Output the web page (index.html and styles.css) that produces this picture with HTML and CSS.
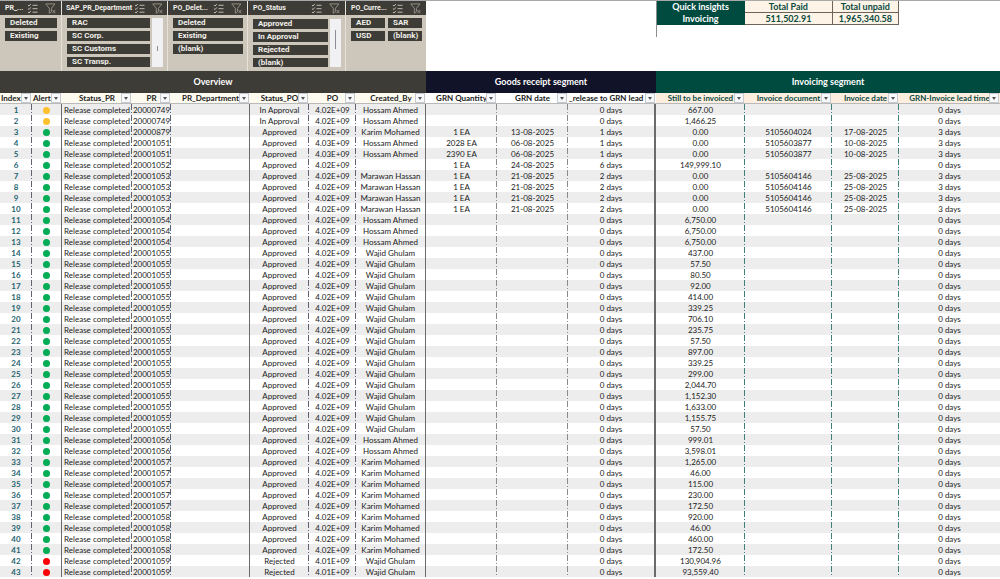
FILE: index.html
```
<!DOCTYPE html>
<html lang="en">
<head>
  <meta charset="UTF-8" />
  <title>PR / PO tracker</title>
  <link rel="stylesheet" href="styles.css">
</head>
<body>

  <svg width="0" height="0" class="icon-defs" aria-hidden="true">
    <symbol id="multi" viewBox="0 0 12 12">
      <path d="M1 2.2l1.2 1.2L4.2 1M1 6l1.2 1.2L4.2 4.8M1 9.8L2.2 11l2-2.4M6 2.5h5.5M6 6.2h5.5M6 10h5.5" />
    </symbol>
    <symbol id="clear" viewBox="0 0 12 12">
      <path d="M.8 1h10L7 5.8M.8 1l3.9 4.8v5.4L7 9.5V5.8M8 7.5l3.4 3.7M11.4 7.5L8 11.2" />
    </symbol>
  </svg>

  <header class="top">
    <div class="slicers" id="slicers"></div>
    <table class="insights">
      <tr><th class="label">Quick insights</th><th>Total Paid</th><th>Total unpaid</th></tr>
      <tr><th class="label">Invoicing</th><td>511,502.91</td><td>1,965,340.58</td></tr>
    </table>
  </header>

  <table class="tracker">
    <colgroup>
      <col class="c-index"><col class="c-alert"><col class="c-status-pr"><col class="c-pr"><col class="c-dept">
      <col class="c-status-po"><col class="c-po"><col class="c-by">
      <col class="c-qty"><col class="c-date"><col class="c-release">
      <col class="c-still"><col class="c-doc"><col class="c-inv-date"><col class="c-lead">
    </colgroup>
    <thead>
      <tr class="bands">
        <th colspan="8" class="overview">Overview</th>
        <th colspan="3" class="goods">Goods receipt segment</th>
        <th colspan="4" class="invoicing">Invoicing segment</th>
      </tr>
      <tr class="fields" id="fields"></tr>
    </thead>
    <tbody id="rows"></tbody>
  </table>

  <script src="script.js"></script>
</body>
</html>
```
FILE: styles.css
```
body {
  margin: 0;
  background: white;
  color: #222;
  font-family: Lato, "Liberation Sans", sans-serif;
  font-size: 8px;
  overflow: hidden;
}
button {
  margin: 0;
  padding: 0;
  border: none;
  font-family: inherit;
  font-size: inherit;
  cursor: pointer;
}
table { border-collapse: separate; border-spacing: 0; table-layout: fixed; }
th, td { padding: 0; }
.icon-defs { position: absolute; }

/* top area */
.top {
  display: flex;
  align-items: flex-start;
  height: 70px;
  border-top: 1px solid #a9a9a9;
}
.slicers {
  display: grid;
  grid-template-columns: 61fr 105fr 79fr 97fr 80fr;
  gap: 1px;
  width: 42.6%;
  height: 70px;
  background: #e6e2da;
  font-family: Roboto, "Liberation Sans", sans-serif;
}
.slicer {
  display: flex;
  flex-direction: column;
  min-width: 0;
  background: #cdc6ba;
}
.slicer-head {
  display: flex;
  align-items: center;
  gap: 7px;
  height: 14px;
  padding: 0 5px;
  background: #3d3c36;
  color: #f1efea;
}
.slicer h2 {
  flex: 1;
  min-width: 0;
  margin: 0;
  font-size: 7px;
  font-weight: bold;
  line-height: 14px;
  white-space: nowrap;
}
.tool { width: 11px; height: 11px; background: none; }
.tool svg {
  display: block;
  width: 11px;
  height: 11px;
  fill: none;
  stroke: #c9c5bb;
}
.tool:last-child svg { stroke: #99958b; }
.slicer.tight .slicer-head { padding: 0 4px; }
.slicer-body {
  display: flex;
  gap: 2px;
  height: 49px;
  margin: 3px 4px 0 5px;
  overflow: hidden;
}
.slicer.low .slicer-body { height: 48px; margin-top: 4px; }
.items {
  display: grid;
  flex: 1;
  align-content: start;
  gap: 3px;
}
.items.two { grid-template-columns: 1fr 1fr; }
.items button {
  height: 10px;
  padding-left: 5px;
  background: #3d3c36;
  color: #f1efea;
  font-weight: bold;
  line-height: 10px;
  text-align: left;
}
.scroll { width: 11px; padding-top: 28px; background: #f1f0f2; }
.scroll i { display: block; width: 1px; height: 5px; margin: 0 auto; background: #8c8c98; }
.scroll.long { padding-top: 11px; }
.scroll.long i { height: 19px; }

.insights {
  width: 24.3%;
  margin-left: 23%;
  padding-bottom: 12px;
  border-left: 1px solid #8c8c8c;
  color: #0b4a3f;
  font-size: 9px;
  font-weight: bold;
  text-align: center;
}
.insights th, .insights td {
  height: 11px;
  border: 1px solid #6e6459;
  border-width: 0 1px 1px 0;
  background: #fdf3e6;
  line-height: 11px;
}
.insights .label { width: 36%; border-color: #004b40; background: #004b40; color: white; }
.insights th:last-child { width: 27%; }

/* main table */
.tracker { width: 100%; text-align: center; }
.c-index { width: 3.2%; }
.c-alert { width: 3%; }
.c-status-pr, .c-by { width: 7%; }
.c-pr { width: 3.9%; }
.c-dept { width: 7.9%; }
.c-status-po { width: 5.9%; }
.c-po { width: 4.7%; }
.c-qty, .c-date { width: 7.1%; }
.c-release { width: 8.8%; }
.c-still { width: 8.9%; }
.c-doc { width: 8.7%; }
.c-inv-date { width: 6.7%; }
.c-lead { width: 10.1%; }

.bands th { height: 22px; color: white; font-size: 9px; line-height: 22px; }
.overview { background: #3d3c36; }
.goods { background: #111428; }
.invoicing { background: #004b40; }

.fields th {
  position: relative;
  height: 10px;
  border-bottom: 1px solid #b9b9b9;
  background: #fdfaf0;
  color: #222;
  line-height: 10px;
}
.fields span {
  display: flex;
  justify-content: center;
  overflow: hidden;
  white-space: nowrap;
}
.fields .left span { justify-content: flex-start; padding-left: 1px; }
.fields .gr { background: white; }
.fields .inv { background: #fdeedf; color: #0b4a3f; }
.fields button {
  position: absolute;
  top: 0;
  right: 1px;
  width: 10px;
  height: 10px;
  border: 1px solid #c6c9d0;
  background: #f8f9fb;
}
.fields button::after {
  content: "";
  display: block;
  width: 0;
  margin: 0 auto;
  border: 2px solid transparent;
  border-top: 3px solid #555;
  border-bottom: 0;
}

.tracker td {
  height: 10px;
  padding-top: 1px;
  overflow: hidden;
  line-height: 10px;
  white-space: nowrap;
}
.tracker tbody tr:nth-child(odd) { background: #ededed; }
.tracker tbody td:first-child { color: #1f6470; font-weight: bold; }
.dash {
  background: linear-gradient(#5f6470 0 6px, transparent 6px 8px, #5f6470 8px 9px, transparent 9px) right / 1px 11px no-repeat;
}
.dash.gr {
  background-image: linear-gradient(#8a8a8a 0 6px, transparent 6px 8px, #8a8a8a 8px 9px, transparent 9px);
}
.dash.inv {
  background-image: linear-gradient(#3f8078 0 6px, transparent 6px 8px, #3f8078 8px 9px, transparent 9px);
}
.solid { border-right: 1px solid #6b6b6b; }
.solid.gr { border-right-width: 2px; }
.dot {
  display: block;
  width: 7px;
  height: 7px;
  margin: 0 auto;
  border-radius: 50%;
}
.yellow { background: #fdc02f; }
.green { background: #00ac55; }
.red { background: #fb0007; }
```
FILE: script.js
```
const slicers = [
  { title: 'PR_...', items: ['Deleted', 'Existing'] },
  { title: 'SAP_PR_Department', items: ['RAC', 'SC Corp.', 'SC Customs', 'SC Transp.'], scroll: 'scroll', cls: 'tight' },
  { title: 'PO_Delet...', items: ['Deleted', 'Existing', '(blank)'] },
  { title: 'PO_Status', items: ['Approved', 'In Approval', 'Rejected', '(blank)'], scroll: 'scroll long', cls: 'low' },
  { title: 'PO_Curre...', items: ['AED', 'SAR', 'USD', '(blank)'], grid: 'two' }
];

const icon = (name, label) =>
  `<button class="tool" aria-label="${label}"><svg><use href="#${name}"/></svg></button>`;

document.getElementById('slicers').innerHTML = slicers.map(s => `
  <section class="slicer ${s.cls || ''}">
    <div class="slicer-head"><h2>${s.title}</h2>${icon('multi', 'Multi-select')}${icon('clear', 'Clear filter')}</div>
    <div class="slicer-body">
      <div class="items ${s.grid || ''}">${s.items.map(i => `<button>${i}</button>`).join('')}</div>
      ${s.scroll ? `<div class="${s.scroll}"><i></i></div>` : ''}
    </div>
  </section>`).join('');

// column title, classes of the header cell, classes of the body cells
const columns = [
  ['Index', 'left', 'dash'],
  ['Alert', 'left', 'solid'],
  ['Status_PR', '', 'dash'],
  ['PR', '', 'dash'],
  ['PR_Department', '', 'solid'],
  ['Status_PO', '', 'dash'],
  ['PO', '', 'dash'],
  ['Created_By', '', 'solid'],
  ['GRN Quantity', 'gr', 'dash gr'],
  ['GRN date', 'gr', 'dash gr'],
  ['_release to GRN lead', 'gr left', 'solid gr'],
  ['Still to be invoiced', 'inv', 'dash inv'],
  ['Invoice document', 'inv', 'dash inv'],
  ['Invoice date', 'inv', 'dash inv'],
  ['GRN-Invoice lead time', 'inv', '']
];

document.getElementById('fields').innerHTML = columns.map(c =>
  `<th class="${c[1]}"><span>${c[0]}</span><button aria-label="Filter ${c[0]}"></button></th>`).join('');

const H = 'Hossam Ahmed', K = 'Karim Mohamed', M = 'Marawan Hassan', W = 'Wajid Ghulam';

// PR, created by, still to be invoiced, then GRN quantity, GRN date, release days, document, invoice date, lead days
const data = [
  ['20000749', H, '667.00'],
  ['20000749', H, '1,466.25'],
  ['20000879', K, '0.00', '1 EA', '13-08-2025', 1, '5105604024', '17-08-2025', 3],
  ['20001051', H, '0.00', '2028 EA', '06-08-2025', 1, '5105603877', '10-08-2025', 3],
  ['20001051', H, '0.00', '2390 EA', '06-08-2025', 1, '5105603877', '10-08-2025', 3],
  ['20001052', '', '149,999.10', '1 EA', '24-08-2025', 6],
  ['20001053', M, '0.00', '1 EA', '21-08-2025', 2, '5105604146', '25-08-2025', 3],
  ['20001053', M, '0.00', '1 EA', '21-08-2025', 2, '5105604146', '25-08-2025', 3],
  ['20001053', M, '0.00', '1 EA', '21-08-2025', 2, '5105604146', '25-08-2025', 3],
  ['20001053', M, '0.00', '1 EA', '21-08-2025', 2, '5105604146', '25-08-2025', 3],
  ['20001054', H, '6,750.00'],
  ['20001054', H, '6,750.00'],
  ['20001054', H, '6,750.00'],
  ['20001055', W, '437.00'],
  ['20001055', W, '57.50'],
  ['20001055', W, '80.50'],
  ['20001055', W, '92.00'],
  ['20001055', W, '414.00'],
  ['20001055', W, '339.25'],
  ['20001055', W, '706.10'],
  ['20001055', W, '235.75'],
  ['20001055', W, '57.50'],
  ['20001055', W, '897.00'],
  ['20001055', W, '339.25'],
  ['20001055', W, '299.00'],
  ['20001055', W, '2,044.70'],
  ['20001055', W, '1,152.30'],
  ['20001055', W, '1,633.00'],
  ['20001055', W, '1,155.75'],
  ['20001055', W, '57.50'],
  ['20001056', H, '999.01'],
  ['20001056', H, '3,598.01'],
  ['20001057', K, '1,265.00'],
  ['20001057', K, '46.00'],
  ['20001057', K, '115.00'],
  ['20001057', K, '230.00'],
  ['20001057', K, '172.50'],
  ['20001058', K, '920.00'],
  ['20001058', K, '46.00'],
  ['20001058', K, '460.00'],
  ['20001058', K, '172.50'],
  ['20001059', W, '130,904.96'],
  ['20001059', W, '93,559.40']
];

document.getElementById('rows').innerHTML = data.map((r, i) => {
  const [pr, by, still, qty = '', date = '', release = 0, doc = '', invDate = '', lead = 0] = r;
  const n = i + 1;
  const status = n <= 2 ? 'In Approval' : n >= 42 ? 'Rejected' : 'Approved';
  const color = n <= 2 ? 'yellow' : n >= 42 ? 'red' : 'green';
  const po = n >= 42 ? '4.01E+09' : n === 4 || n === 5 ? '4.03E+09' : '4.02E+09';
  const cells = [n, `<span class="dot ${color}"></span>`, 'Release completed', pr, '', status, po, by,
    qty, date, `${release} days`, still, doc, invDate, `${lead} days`];
  return `<tr>${cells.map((c, j) => `<td class="${columns[j][2]}">${c}</td>`).join('')}</tr>`;
}).join('');
```
